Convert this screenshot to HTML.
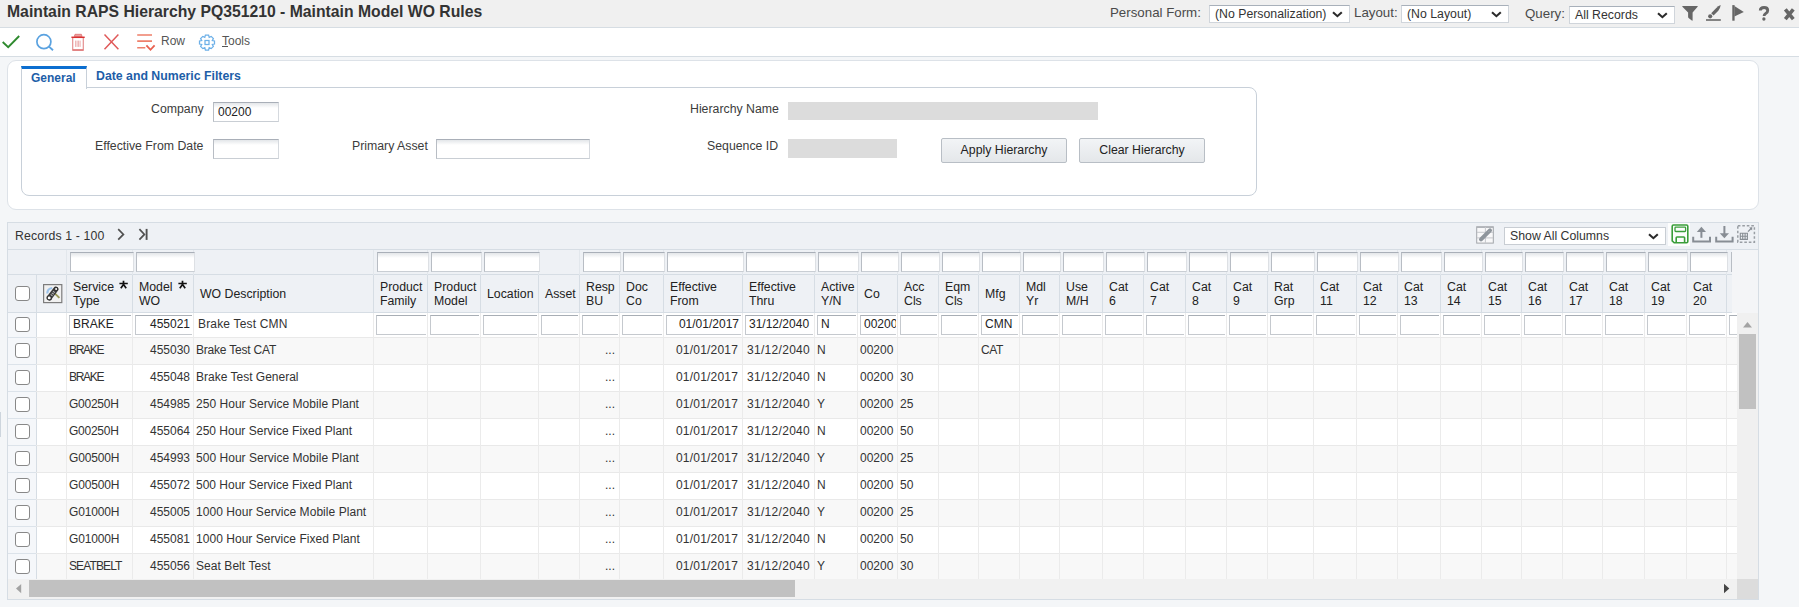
<!DOCTYPE html><html><head><meta charset="utf-8"><title>Maintain RAPS Hierarchy</title><style>
*{box-sizing:border-box;margin:0;padding:0}
html,body{width:1799px;height:607px;overflow:hidden}
body{position:relative;background:#f4f6f8;font-family:"Liberation Sans",sans-serif;color:#333;font-size:12px}
.a{position:absolute}
.t{position:absolute;white-space:nowrap;line-height:1}
#hdr{left:0;top:0;width:1799px;height:28px;background:#f0f0f0;border-bottom:1px solid #d6dde3}
#title{left:7px;top:4px;font-size:15.75px;font-weight:bold;color:#333}
.hl{font-size:13.3px;color:#4a4a4a}
.sel{position:absolute;background:#fff;border:1px solid #d0d5db;border-top-color:#a8b0ba}
.sel span{position:absolute;left:5px;top:1px;font-size:12.3px;color:#333;white-space:nowrap;line-height:14px}
.chev{position:absolute;width:11px;height:7px}
#tb{left:0;top:28px;width:1799px;height:29px;background:#fff;border-bottom:1px solid #d6dde3}
#panel{left:7px;top:60px;width:1752px;height:150px;background:#fff;border:1px solid #dde2e8;border-radius:9px}
#inner{left:21px;top:87px;width:1236px;height:109px;border:1px solid #c8d0d9;border-radius:8px;border-top-left-radius:0}
.lbl{font-size:12.3px;color:#3c3c3c;text-align:right}
.inp{position:absolute;background:linear-gradient(#e3e6e9,#fff 5px);border:1px solid #c9ced4;border-top-color:#a9afb8;border-left-color:#b8bdc4;border-right-color:#d5d9de}
.ro{position:absolute;background:#dcdcdc}
.btn{position:absolute;background:linear-gradient(#f2f4f6,#e4e7ea);border:1px solid #b8bec5;border-radius:2px;font-size:12.3px;color:#222;text-align:center;line-height:22px}
#grid{left:7px;top:222px;width:1752px;height:378px;background:#fff;border:1px solid #d6dde4}
#recbar{left:8px;top:223px;width:1750px;height:27px;background:#eef1f5;border-bottom:1px solid #d6dde4}
#frow{left:8px;top:250px;width:1724px;height:25px;background:#eef1f5;border-bottom:1px solid #d6dde4}
#hrow{left:8px;top:275px;width:1724px;height:38px;background:#eef1f5;border-bottom:1px solid #d6dde4}
.vh{position:absolute;width:1px;background:#d6dde4}
.vd{position:absolute;width:1px;background:#ebebeb}
.hd{position:absolute;height:1px;background:#e8e8e8}
.finp{position:absolute;background:linear-gradient(#e3e6e9,#fff 5px);border:1px solid #c9ced4;border-top-color:#a9afb8;border-left-color:#b8bdc4;border-right-color:#dde0e4}
.ht{position:absolute;font-size:12.3px;color:#222;line-height:13.5px;white-space:nowrap}
.cell{position:absolute;font-size:12px;color:#333;line-height:14px;white-space:nowrap}
.cb{position:absolute;width:15px;height:15px;border:1.5px solid #888;border-radius:3px;background:#fff}
.ei{position:absolute;background:#fff;border:1px solid #c5c9ce;border-right:none;border-top-color:#a8aeb5;font-size:12px;color:#222;line-height:18px;white-space:nowrap;overflow:hidden}
</style></head><body>
<div id="hdr" class="a"></div>
<div id="title" class="t">Maintain RAPS Hierarchy PQ351210 - Maintain Model WO Rules</div>
<div class="t hl" style="left:1110px;top:6px">Personal Form:</div>
<div class="sel" style="left:1209px;top:5px;width:141px;height:18px"><span>(No Personalization)</span><svg class="chev" style="left:122px;top:5px" viewBox="0 0 11 7"><path d="M1 1.2 L5.4 5.2 L9.8 1.2" stroke="#2a2a2a" stroke-width="2.1" fill="none"/></svg></div>
<div class="t hl" style="left:1354px;top:6px">Layout:</div>
<div class="sel" style="left:1401px;top:5px;width:108px;height:18px"><span>(No Layout)</span><svg class="chev" style="left:89px;top:5px" viewBox="0 0 11 7"><path d="M1 1.2 L5.4 5.2 L9.8 1.2" stroke="#2a2a2a" stroke-width="2.1" fill="none"/></svg></div>
<div class="t hl" style="left:1525px;top:7px">Query:</div>
<div class="sel" style="left:1569px;top:6px;width:106px;height:18px"><span>All Records</span><svg class="chev" style="left:87px;top:5px" viewBox="0 0 11 7"><path d="M1 1.2 L5.4 5.2 L9.8 1.2" stroke="#2a2a2a" stroke-width="2.1" fill="none"/></svg></div>
<svg class="a" style="left:1678px;top:2px" width="121" height="22" viewBox="0 0 121 22">
<path d="M4.6 3.9 H19.4 Q20.2 4 19.6 4.8 L14.6 10.4 V18.6 Q14.4 18.9 13.8 18.6 L10.6 16 Q10.1 15.5 10.1 14.8 V10.4 L4.4 4.8 Q3.9 4 4.6 3.9 Z" fill="#666"/>
<path d="M42.7 3 Q42.2 6.5 40.3 8.8 L35.6 13.6 L33.2 11.3 L37.8 6.4 Q40.2 4 42.7 3 Z" fill="#666"/>
<circle cx="32.2" cy="14.3" r="2.1" fill="#666"/>
<rect x="28" y="17.1" width="14.8" height="1.8" fill="#777"/>
<rect x="54.3" y="3.1" width="2.3" height="15.6" fill="#666"/>
<path d="M56.4 4 L65.8 9.9 L56.4 14.4 Z" fill="#666"/>
</svg>
<svg class="a" style="left:1748px;top:2px" width="51" height="22" viewBox="0 0 51 22">
<path d="M12.3 8.6 Q12.3 5.5 16.1 5.5 Q19.7 5.5 19.7 8.5 Q19.7 10.4 17.7 11.5 Q16.1 12.4 16.1 14.1" stroke="#666" stroke-width="2.9" fill="none"/>
<circle cx="15.9" cy="17" r="1.65" fill="#666"/>
<path d="M37.3 7.3 L45.3 17.2 M45.3 7.3 L37.3 17.2" stroke="#666" stroke-width="3.6"/>
</svg>
<div id="tb" class="a"></div>
<svg class="a" style="left:0;top:28px" width="260" height="28" viewBox="0 0 260 28">
<path d="M2.7 14 L8.2 19.1 L19.2 8" stroke="#2e8a2e" stroke-width="1.9" fill="none"/>
<circle cx="43.9" cy="13.7" r="7" stroke="#5aa2e0" stroke-width="1.7" fill="none"/><path d="M49 18.6 L53 22.2" stroke="#5aa2e0" stroke-width="1.9"/>
<path d="M74.3 8.6 L75 6.3 H81.4 L82.1 8.6 Z" fill="#eaa0a0" stroke="#e07070" stroke-width="0.8"/>
<path d="M71.4 9.3 H84.7" stroke="#d93030" stroke-width="1.5"/>
<path d="M72.7 10 V22.2 H83.3 V10" stroke="#e59090" stroke-width="1.2" fill="none"/>
<path d="M72.7 22 H83.3" stroke="#e07a7a" stroke-width="1.6"/>
<path d="M75.6 12.6 V18.9 M77.1 12.6 V18.9 M78.6 12.6 V18.9 M80.1 12.6 V18.9" stroke="#eaa5a5" stroke-width="0.9"/>
<path d="M104.5 6.6 L118.4 21.2 M118.4 6.6 L104.5 21.2" stroke="#e05a5a" stroke-width="1.5"/>
<path d="M137.2 7 H152 M137.2 13.1 H152 M137.2 19.7 H145.3" stroke="#ee7f6a" stroke-width="1.6"/><path d="M146.4 17.4 L150.5 21.8 L154.6 17.4" stroke="#e8604f" stroke-width="1.8" fill="none"/>
<g transform="translate(207,14.5)" fill="none" stroke="#6db0e8" stroke-width="1.25">
<path d="M-1.6 -7.5 L1.6 -7.5 L2.2 -5.2 L4.2 -6.1 L6.4 -3.9 L5.3 -2 L7.5 -1.5 L7.5 1.5 L5.3 2 L6.4 3.9 L4.2 6.1 L2.2 5.2 L1.6 7.5 L-1.6 7.5 L-2.2 5.2 L-4.2 6.1 L-6.4 3.9 L-5.3 2 L-7.5 1.5 L-7.5 -1.5 L-5.3 -2 L-6.4 -3.9 L-4.2 -6.1 L-2.2 -5.2 Z"/>
<rect x="-2" y="-2" width="4" height="4"/></g>
</svg>
<div class="t" style="left:161px;top:35px;font-size:12px;color:#555">Row</div>
<div class="t" style="left:222px;top:35px;font-size:12px;color:#555"><span style="text-decoration:underline">T</span>ools</div>
<div id="panel" class="a"></div>
<div id="inner" class="a"></div>
<div class="a" style="left:21px;top:66px;width:66px;height:23px;background:#fff;border-left:1px solid #c8d0d9;border-right:1px solid #c8d0d9;border-top:3px solid #0b6ed0"></div>
<div class="t" style="left:31px;top:72px;font-size:12px;font-weight:bold;color:#1d5ea8">General</div>
<div class="t" style="left:96px;top:70px;font-size:12.3px;font-weight:bold;color:#1d5ea8">Date and Numeric Filters</div>
<div class="t lbl" style="left:151px;top:103px">Company</div>
<div class="inp" style="left:213px;top:102px;width:66px;height:20px"><span class="t" style="left:4px;top:3px;font-size:12px;color:#222">00200</span></div>
<div class="t lbl" style="left:95px;top:140px">Effective From Date</div>
<div class="inp" style="left:213px;top:139px;width:66px;height:20px"></div>
<div class="t lbl" style="left:352px;top:140px">Primary Asset</div>
<div class="inp" style="left:436px;top:139px;width:154px;height:20px"></div>
<div class="t lbl" style="left:690px;top:103px">Hierarchy Name</div>
<div class="ro" style="left:788px;top:102px;width:310px;height:18px"></div>
<div class="t lbl" style="left:707px;top:140px">Sequence ID</div>
<div class="ro" style="left:788px;top:139px;width:109px;height:19px"></div>
<div class="btn" style="left:941px;top:138px;width:126px;height:25px">Apply Hierarchy</div>
<div class="btn" style="left:1079px;top:138px;width:126px;height:25px">Clear Hierarchy</div>
<div id="grid" class="a"></div>
<div id="recbar" class="a"></div>
<div class="t" style="left:15px;top:230px;font-size:12.3px;color:#333;letter-spacing:0.13px">Records 1 - 100</div>
<svg class="a" style="left:110px;top:226px" width="44" height="18" viewBox="0 0 44 18">
<path d="M8.2 3.2 L13.4 8.4 L8.2 13.6" stroke="#505050" stroke-width="1.7" fill="none"/>
<path d="M29.4 3.2 L34.4 8.4 L29.4 13.6" stroke="#505050" stroke-width="1.7" fill="none"/><path d="M36.6 2.9 V13.9" stroke="#505050" stroke-width="1.9"/>
</svg>
<svg class="a" style="left:1474px;top:223px" width="24" height="24" viewBox="0 0 24 24">
<rect x="2.7" y="3.8" width="16.6" height="16.3" fill="#f8f8f9" stroke="#a2a6ab" stroke-width="1"/>
<path d="M2.7 4.3 H19.3" stroke="#b0b4b9" stroke-width="1.4"/>
<path d="M11.4 4 V20 M3 9.3 H19 M3 14.9 H19" stroke="#c5c8cc" stroke-width="1"/>
<path d="M7 16.3 L16 7.3" stroke="#8e959c" stroke-width="4" stroke-linecap="round"/>
<path d="M14.3 9 L15.6 7.7" stroke="#a8aeb4" stroke-width="1"/>
</svg>
<div class="sel" style="left:1504px;top:227px;width:162px;height:18px;border-color:#c8cdd3"><span style="top:1px;font-size:12.3px">Show All Columns</span><svg class="chev" style="left:143px;top:5px" viewBox="0 0 11 7"><path d="M1 1.2 L5.4 5.2 L9.8 1.2" stroke="#2a2a2a" stroke-width="2.1" fill="none"/></svg></div>
<svg class="a" style="left:1665px;top:220px" width="95" height="30" viewBox="0 0 95 30">
<rect x="3" y="3" width="22" height="23" fill="#fdfdfd"/>
<path d="M7.2 6.2 Q7.2 5 8.4 5 H21.6 Q22.8 5 22.8 6.2 V21.6 Q22.8 22.8 21.6 22.8 H9.2 L7.2 20.8 Z" fill="none" stroke="#3a9e3a" stroke-width="1.6"/>
<rect x="10" y="7.2" width="10.6" height="4.3" rx="0.8" fill="none" stroke="#3a9e3a" stroke-width="1.3"/>
<path d="M11.2 22.5 V17.8 Q11.2 17 12 17 H18.8 Q19.6 17 19.6 17.8 V22.5" fill="none" stroke="#3a9e3a" stroke-width="1.6"/>
<path d="M28.2 16.8 V21.5 H45 V16.8" stroke="#878d94" stroke-width="2" fill="none"/><path d="M36.4 17.8 V10" stroke="#878d94" stroke-width="2"/><path d="M31.8 12 L36.4 6.8 L41 12 Z" fill="#878d94"/>
<path d="M51.2 16.8 V21.5 H67.6 V16.8" stroke="#878d94" stroke-width="2" fill="none"/><path d="M59.4 6 V14" stroke="#878d94" stroke-width="2"/><path d="M54.8 13.2 L59.4 18.2 L64 13.2 Z" fill="#878d94"/>
<rect x="72.8" y="5.8" width="16.6" height="16.4" fill="none" stroke="#999ea4" stroke-width="1.5" stroke-dasharray="2.6,1.9"/>
<path d="M75.3 13.2 H82.4 V19.4 H75.3 Z M75.3 16.3 H82.4 M77.7 13.2 V19.4 M80.1 13.2 V19.4" stroke="#878d94" stroke-width="1.1" fill="none"/>
<path d="M83 11.6 L86.6 8" stroke="#878d94" stroke-width="1.3"/><path d="M84.2 7.5 L87.3 7.3 L87.1 10.4 Z" fill="#878d94"/>
</svg>
<div class="a" style="left:1732px;top:250px;width:26px;height:63px;background:#f4f5f7"></div>
<div id="frow" class="a"></div>
<div class="a" style="left:1731px;top:252px;width:1px;height:20px;background:#b8bdc4"></div>
<div id="hrow" class="a"></div>
<div class="vh" style="left:36px;top:275px;height:38px"></div>
<div class="vh" style="left:66px;top:275px;height:38px"></div>
<div class="vh" style="left:132px;top:275px;height:38px"></div>
<div class="vh" style="left:132px;top:250px;height:25px;background:#e2e7ec"></div>
<div class="finp" style="left:70px;top:252px;width:64px;height:20px"></div>
<div class="vh" style="left:193px;top:275px;height:38px"></div>
<div class="vh" style="left:193px;top:250px;height:25px;background:#e2e7ec"></div>
<div class="finp" style="left:136px;top:252px;width:59px;height:20px"></div>
<div class="vh" style="left:373px;top:275px;height:38px"></div>
<div class="vh" style="left:373px;top:250px;height:25px;background:#e2e7ec"></div>
<div class="vh" style="left:427px;top:275px;height:38px"></div>
<div class="vh" style="left:427px;top:250px;height:25px;background:#e2e7ec"></div>
<div class="finp" style="left:377px;top:252px;width:52px;height:20px"></div>
<div class="vh" style="left:480px;top:275px;height:38px"></div>
<div class="vh" style="left:480px;top:250px;height:25px;background:#e2e7ec"></div>
<div class="finp" style="left:431px;top:252px;width:51px;height:20px"></div>
<div class="vh" style="left:538px;top:275px;height:38px"></div>
<div class="vh" style="left:538px;top:250px;height:25px;background:#e2e7ec"></div>
<div class="finp" style="left:484px;top:252px;width:56px;height:20px"></div>
<div class="vh" style="left:579px;top:275px;height:38px"></div>
<div class="vh" style="left:579px;top:250px;height:25px;background:#e2e7ec"></div>
<div class="vh" style="left:619px;top:275px;height:38px"></div>
<div class="vh" style="left:619px;top:250px;height:25px;background:#e2e7ec"></div>
<div class="finp" style="left:583px;top:252px;width:38px;height:20px"></div>
<div class="vh" style="left:663px;top:275px;height:38px"></div>
<div class="vh" style="left:663px;top:250px;height:25px;background:#e2e7ec"></div>
<div class="finp" style="left:623px;top:252px;width:42px;height:20px"></div>
<div class="vh" style="left:742px;top:275px;height:38px"></div>
<div class="vh" style="left:742px;top:250px;height:25px;background:#e2e7ec"></div>
<div class="finp" style="left:667px;top:252px;width:77px;height:20px"></div>
<div class="vh" style="left:814px;top:275px;height:38px"></div>
<div class="vh" style="left:814px;top:250px;height:25px;background:#e2e7ec"></div>
<div class="finp" style="left:746px;top:252px;width:70px;height:20px"></div>
<div class="vh" style="left:857px;top:275px;height:38px"></div>
<div class="vh" style="left:857px;top:250px;height:25px;background:#e2e7ec"></div>
<div class="finp" style="left:818px;top:252px;width:41px;height:20px"></div>
<div class="vh" style="left:897px;top:275px;height:38px"></div>
<div class="vh" style="left:897px;top:250px;height:25px;background:#e2e7ec"></div>
<div class="finp" style="left:861px;top:252px;width:38px;height:20px"></div>
<div class="vh" style="left:938px;top:275px;height:38px"></div>
<div class="vh" style="left:938px;top:250px;height:25px;background:#e2e7ec"></div>
<div class="finp" style="left:901px;top:252px;width:39px;height:20px"></div>
<div class="vh" style="left:978px;top:275px;height:38px"></div>
<div class="vh" style="left:978px;top:250px;height:25px;background:#e2e7ec"></div>
<div class="finp" style="left:942px;top:252px;width:38px;height:20px"></div>
<div class="vh" style="left:1019px;top:275px;height:38px"></div>
<div class="vh" style="left:1019px;top:250px;height:25px;background:#e2e7ec"></div>
<div class="finp" style="left:982px;top:252px;width:39px;height:20px"></div>
<div class="vh" style="left:1059px;top:275px;height:38px"></div>
<div class="vh" style="left:1059px;top:250px;height:25px;background:#e2e7ec"></div>
<div class="finp" style="left:1023px;top:252px;width:38px;height:20px"></div>
<div class="vh" style="left:1102px;top:275px;height:38px"></div>
<div class="vh" style="left:1102px;top:250px;height:25px;background:#e2e7ec"></div>
<div class="finp" style="left:1063px;top:252px;width:41px;height:20px"></div>
<div class="vh" style="left:1143px;top:275px;height:38px"></div>
<div class="vh" style="left:1143px;top:250px;height:25px;background:#e2e7ec"></div>
<div class="finp" style="left:1106px;top:252px;width:39px;height:20px"></div>
<div class="vh" style="left:1185px;top:275px;height:38px"></div>
<div class="vh" style="left:1185px;top:250px;height:25px;background:#e2e7ec"></div>
<div class="finp" style="left:1147px;top:252px;width:40px;height:20px"></div>
<div class="vh" style="left:1226px;top:275px;height:38px"></div>
<div class="vh" style="left:1226px;top:250px;height:25px;background:#e2e7ec"></div>
<div class="finp" style="left:1189px;top:252px;width:39px;height:20px"></div>
<div class="vh" style="left:1267px;top:275px;height:38px"></div>
<div class="vh" style="left:1267px;top:250px;height:25px;background:#e2e7ec"></div>
<div class="finp" style="left:1230px;top:252px;width:39px;height:20px"></div>
<div class="vh" style="left:1313px;top:275px;height:38px"></div>
<div class="vh" style="left:1313px;top:250px;height:25px;background:#e2e7ec"></div>
<div class="finp" style="left:1271px;top:252px;width:44px;height:20px"></div>
<div class="vh" style="left:1356px;top:275px;height:38px"></div>
<div class="vh" style="left:1356px;top:250px;height:25px;background:#e2e7ec"></div>
<div class="finp" style="left:1317px;top:252px;width:41px;height:20px"></div>
<div class="vh" style="left:1397px;top:275px;height:38px"></div>
<div class="vh" style="left:1397px;top:250px;height:25px;background:#e2e7ec"></div>
<div class="finp" style="left:1360px;top:252px;width:39px;height:20px"></div>
<div class="vh" style="left:1440px;top:275px;height:38px"></div>
<div class="vh" style="left:1440px;top:250px;height:25px;background:#e2e7ec"></div>
<div class="finp" style="left:1401px;top:252px;width:41px;height:20px"></div>
<div class="vh" style="left:1481px;top:275px;height:38px"></div>
<div class="vh" style="left:1481px;top:250px;height:25px;background:#e2e7ec"></div>
<div class="finp" style="left:1444px;top:252px;width:39px;height:20px"></div>
<div class="vh" style="left:1521px;top:275px;height:38px"></div>
<div class="vh" style="left:1521px;top:250px;height:25px;background:#e2e7ec"></div>
<div class="finp" style="left:1485px;top:252px;width:38px;height:20px"></div>
<div class="vh" style="left:1562px;top:275px;height:38px"></div>
<div class="vh" style="left:1562px;top:250px;height:25px;background:#e2e7ec"></div>
<div class="finp" style="left:1525px;top:252px;width:39px;height:20px"></div>
<div class="vh" style="left:1602px;top:275px;height:38px"></div>
<div class="vh" style="left:1602px;top:250px;height:25px;background:#e2e7ec"></div>
<div class="finp" style="left:1566px;top:252px;width:38px;height:20px"></div>
<div class="vh" style="left:1644px;top:275px;height:38px"></div>
<div class="vh" style="left:1644px;top:250px;height:25px;background:#e2e7ec"></div>
<div class="finp" style="left:1606px;top:252px;width:40px;height:20px"></div>
<div class="vh" style="left:1686px;top:275px;height:38px"></div>
<div class="vh" style="left:1686px;top:250px;height:25px;background:#e2e7ec"></div>
<div class="finp" style="left:1648px;top:252px;width:40px;height:20px"></div>
<div class="vh" style="left:1726px;top:275px;height:38px"></div>
<div class="vh" style="left:1726px;top:250px;height:25px;background:#e2e7ec"></div>
<div class="finp" style="left:1690px;top:252px;width:38px;height:20px"></div>
<div class="vh" style="left:66px;top:250px;height:25px;background:#e2e7ec"></div>
<div class="cb" style="left:15px;top:286px"></div>
<svg class="a" style="left:43px;top:284px" width="20" height="20" viewBox="0 0 20 20">
<rect x="0.6" y="0.6" width="18.2" height="18" fill="#f1f1f1" stroke="#7d7d7d" stroke-width="1.2"/>
<path d="M4.3 9.5 Q4.3 4.6 9.2 4" stroke="#9cc3ea" stroke-width="2.2" fill="none"/>
<path d="M11.8 9.3 L16.4 13.9" stroke="#9a9a5a" stroke-width="1.9"/>
<path d="M6.6 13.4 L12.8 5.2" stroke="#3a3a3a" stroke-width="5.2" stroke-linecap="round"/>
<path d="M8.3 11.6 L11.4 7.3" stroke="#b5b5b5" stroke-width="2.4" stroke-dasharray="1,1"/>
<circle cx="6.2" cy="13.9" r="2.1" fill="#fff" stroke="#333" stroke-width="1.3"/>
<circle cx="13.1" cy="4.9" r="1.6" fill="#fff" stroke="#333" stroke-width="1.2"/>
</svg>
<div class="ht" style="left:73px;top:281px">Service<br>Type</div>
<svg class="a" style="left:119px;top:280px" width="10" height="10" viewBox="0 0 10 10"><path d="M4.5 0.8 V5 M0.4 3.5 H8.8 M4.5 4.6 L1.8 8.2 M4.5 4.6 L7.2 8.2" stroke="#111" stroke-width="1.7" fill="none"/></svg>
<div class="ht" style="left:139px;top:281px">Model<br>WO</div>
<svg class="a" style="left:178px;top:280px" width="10" height="10" viewBox="0 0 10 10"><path d="M4.5 0.8 V5 M0.4 3.5 H8.8 M4.5 4.6 L1.8 8.2 M4.5 4.6 L7.2 8.2" stroke="#111" stroke-width="1.7" fill="none"/></svg>
<div class="ht" style="left:200px;top:288px">WO Description</div>
<div class="ht" style="left:380px;top:281px">Product<br>Family</div>
<div class="ht" style="left:434px;top:281px">Product<br>Model</div>
<div class="ht" style="left:487px;top:288px">Location</div>
<div class="ht" style="left:545px;top:288px">Asset</div>
<div class="ht" style="left:586px;top:281px">Resp<br>BU</div>
<div class="ht" style="left:626px;top:281px">Doc<br>Co</div>
<div class="ht" style="left:670px;top:281px">Effective<br>From</div>
<div class="ht" style="left:749px;top:281px">Effective<br>Thru</div>
<div class="ht" style="left:821px;top:281px">Active<br>Y/N</div>
<div class="ht" style="left:864px;top:288px">Co</div>
<div class="ht" style="left:904px;top:281px">Acc<br>Cls</div>
<div class="ht" style="left:945px;top:281px">Eqm<br>Cls</div>
<div class="ht" style="left:985px;top:288px">Mfg</div>
<div class="ht" style="left:1026px;top:281px">Mdl<br>Yr</div>
<div class="ht" style="left:1066px;top:281px">Use<br>M/H</div>
<div class="ht" style="left:1109px;top:281px">Cat<br>6</div>
<div class="ht" style="left:1150px;top:281px">Cat<br>7</div>
<div class="ht" style="left:1192px;top:281px">Cat<br>8</div>
<div class="ht" style="left:1233px;top:281px">Cat<br>9</div>
<div class="ht" style="left:1274px;top:281px">Rat<br>Grp</div>
<div class="ht" style="left:1320px;top:281px">Cat<br>11</div>
<div class="ht" style="left:1363px;top:281px">Cat<br>12</div>
<div class="ht" style="left:1404px;top:281px">Cat<br>13</div>
<div class="ht" style="left:1447px;top:281px">Cat<br>14</div>
<div class="ht" style="left:1488px;top:281px">Cat<br>15</div>
<div class="ht" style="left:1528px;top:281px">Cat<br>16</div>
<div class="ht" style="left:1569px;top:281px">Cat<br>17</div>
<div class="ht" style="left:1609px;top:281px">Cat<br>18</div>
<div class="ht" style="left:1651px;top:281px">Cat<br>19</div>
<div class="ht" style="left:1693px;top:281px">Cat<br>20</div>
<div class="a" style="left:8px;top:313px;width:29px;height:267px;background:#f5f7fa;border-right:1px solid #d6dde4"></div>
<div class="a" style="left:37px;top:337px;width:1700px;height:27px;background:#f8f8f8"></div>
<div class="a" style="left:37px;top:364px;width:1700px;height:27px;background:#fff"></div>
<div class="a" style="left:37px;top:391px;width:1700px;height:27px;background:#f8f8f8"></div>
<div class="a" style="left:37px;top:418px;width:1700px;height:27px;background:#fff"></div>
<div class="a" style="left:37px;top:445px;width:1700px;height:27px;background:#f8f8f8"></div>
<div class="a" style="left:37px;top:472px;width:1700px;height:27px;background:#fff"></div>
<div class="a" style="left:37px;top:499px;width:1700px;height:27px;background:#f8f8f8"></div>
<div class="a" style="left:37px;top:526px;width:1700px;height:27px;background:#fff"></div>
<div class="a" style="left:37px;top:553px;width:1700px;height:27px;background:#f8f8f8"></div>
<div class="hd" style="left:8px;top:337px;width:1729px;background:#e9e9e9"></div>
<div class="hd" style="left:8px;top:364px;width:1729px;background:#e9e9e9"></div>
<div class="hd" style="left:8px;top:391px;width:1729px;background:#e9e9e9"></div>
<div class="hd" style="left:8px;top:418px;width:1729px;background:#e9e9e9"></div>
<div class="hd" style="left:8px;top:445px;width:1729px;background:#e9e9e9"></div>
<div class="hd" style="left:8px;top:472px;width:1729px;background:#e9e9e9"></div>
<div class="hd" style="left:8px;top:499px;width:1729px;background:#e9e9e9"></div>
<div class="hd" style="left:8px;top:526px;width:1729px;background:#e9e9e9"></div>
<div class="hd" style="left:8px;top:553px;width:1729px;background:#e9e9e9"></div>
<div class="hd" style="left:8px;top:337px;width:28px;background:#dce3ea"></div>
<div class="hd" style="left:8px;top:364px;width:28px;background:#dce3ea"></div>
<div class="hd" style="left:8px;top:391px;width:28px;background:#dce3ea"></div>
<div class="hd" style="left:8px;top:418px;width:28px;background:#dce3ea"></div>
<div class="hd" style="left:8px;top:445px;width:28px;background:#dce3ea"></div>
<div class="hd" style="left:8px;top:472px;width:28px;background:#dce3ea"></div>
<div class="hd" style="left:8px;top:499px;width:28px;background:#dce3ea"></div>
<div class="hd" style="left:8px;top:526px;width:28px;background:#dce3ea"></div>
<div class="hd" style="left:8px;top:553px;width:28px;background:#dce3ea"></div>
<div class="vd" style="left:66px;top:313px;height:266px"></div>
<div class="vd" style="left:132px;top:313px;height:266px"></div>
<div class="vd" style="left:193px;top:313px;height:266px"></div>
<div class="vd" style="left:373px;top:313px;height:266px"></div>
<div class="vd" style="left:427px;top:313px;height:266px"></div>
<div class="vd" style="left:480px;top:313px;height:266px"></div>
<div class="vd" style="left:538px;top:313px;height:266px"></div>
<div class="vd" style="left:579px;top:313px;height:266px"></div>
<div class="vd" style="left:619px;top:313px;height:266px"></div>
<div class="vd" style="left:663px;top:313px;height:266px"></div>
<div class="vd" style="left:742px;top:313px;height:266px"></div>
<div class="vd" style="left:814px;top:313px;height:266px"></div>
<div class="vd" style="left:857px;top:313px;height:266px"></div>
<div class="vd" style="left:897px;top:313px;height:266px"></div>
<div class="vd" style="left:938px;top:313px;height:266px"></div>
<div class="vd" style="left:978px;top:313px;height:266px"></div>
<div class="vd" style="left:1019px;top:313px;height:266px"></div>
<div class="vd" style="left:1059px;top:313px;height:266px"></div>
<div class="vd" style="left:1102px;top:313px;height:266px"></div>
<div class="vd" style="left:1143px;top:313px;height:266px"></div>
<div class="vd" style="left:1185px;top:313px;height:266px"></div>
<div class="vd" style="left:1226px;top:313px;height:266px"></div>
<div class="vd" style="left:1267px;top:313px;height:266px"></div>
<div class="vd" style="left:1313px;top:313px;height:266px"></div>
<div class="vd" style="left:1356px;top:313px;height:266px"></div>
<div class="vd" style="left:1397px;top:313px;height:266px"></div>
<div class="vd" style="left:1440px;top:313px;height:266px"></div>
<div class="vd" style="left:1481px;top:313px;height:266px"></div>
<div class="vd" style="left:1521px;top:313px;height:266px"></div>
<div class="vd" style="left:1562px;top:313px;height:266px"></div>
<div class="vd" style="left:1602px;top:313px;height:266px"></div>
<div class="vd" style="left:1644px;top:313px;height:266px"></div>
<div class="vd" style="left:1686px;top:313px;height:266px"></div>
<div class="vd" style="left:1726px;top:313px;height:266px"></div>
<div class="cb" style="left:15px;top:317px"></div>
<div class="cb" style="left:15px;top:343px"></div>
<div class="cb" style="left:15px;top:370px"></div>
<div class="cb" style="left:15px;top:397px"></div>
<div class="cb" style="left:15px;top:424px"></div>
<div class="cb" style="left:15px;top:451px"></div>
<div class="cb" style="left:15px;top:478px"></div>
<div class="cb" style="left:15px;top:505px"></div>
<div class="cb" style="left:15px;top:532px"></div>
<div class="cb" style="left:15px;top:559px"></div>
<div class="ei" style="left:69px;top:315px;width:62px;height:20px"><span class="t" style="left:3px;top:2px">BRAKE</span></div>
<div class="ei" style="left:135px;top:315px;width:57px;height:20px"><span class="t" style="right:2px;top:2px">455021</span></div>
<div class="cell" style="left:198px;top:317px;letter-spacing:0.17px">Brake Test CMN</div>
<div class="ei" style="left:376px;top:315px;width:50px;height:20px"></div>
<div class="ei" style="left:430px;top:315px;width:49px;height:20px"></div>
<div class="ei" style="left:483px;top:315px;width:54px;height:20px"></div>
<div class="ei" style="left:541px;top:315px;width:37px;height:20px"></div>
<div class="ei" style="left:582px;top:315px;width:36px;height:20px"></div>
<div class="ei" style="left:622px;top:315px;width:40px;height:20px"></div>
<div class="ei" style="left:666px;top:315px;width:75px;height:20px"><span class="t" style="right:2px;top:2px">01/01/2017</span></div>
<div class="ei" style="left:745px;top:315px;width:68px;height:20px"><span class="t" style="left:3px;top:2px">31/12/2040</span></div>
<div class="ei" style="left:817px;top:315px;width:39px;height:20px"><span class="t" style="left:3px;top:2px">N</span></div>
<div class="ei" style="left:860px;top:315px;width:36px;height:20px"><span class="t" style="left:3px;top:2px">00200</span></div>
<div class="ei" style="left:900px;top:315px;width:37px;height:20px"></div>
<div class="ei" style="left:941px;top:315px;width:36px;height:20px"></div>
<div class="ei" style="left:981px;top:315px;width:37px;height:20px"><span class="t" style="left:3px;top:2px">CMN</span></div>
<div class="ei" style="left:1022px;top:315px;width:36px;height:20px"></div>
<div class="ei" style="left:1062px;top:315px;width:39px;height:20px"></div>
<div class="ei" style="left:1105px;top:315px;width:37px;height:20px"></div>
<div class="ei" style="left:1146px;top:315px;width:38px;height:20px"></div>
<div class="ei" style="left:1188px;top:315px;width:37px;height:20px"></div>
<div class="ei" style="left:1229px;top:315px;width:37px;height:20px"></div>
<div class="ei" style="left:1270px;top:315px;width:42px;height:20px"></div>
<div class="ei" style="left:1316px;top:315px;width:39px;height:20px"></div>
<div class="ei" style="left:1359px;top:315px;width:37px;height:20px"></div>
<div class="ei" style="left:1400px;top:315px;width:39px;height:20px"></div>
<div class="ei" style="left:1443px;top:315px;width:37px;height:20px"></div>
<div class="ei" style="left:1484px;top:315px;width:36px;height:20px"></div>
<div class="ei" style="left:1524px;top:315px;width:37px;height:20px"></div>
<div class="ei" style="left:1565px;top:315px;width:36px;height:20px"></div>
<div class="ei" style="left:1605px;top:315px;width:38px;height:20px"></div>
<div class="ei" style="left:1647px;top:315px;width:38px;height:20px"></div>
<div class="ei" style="left:1689px;top:315px;width:36px;height:20px"></div>
<div class="ei" style="left:1729px;top:315px;width:8px;height:20px;border-right:none"></div>
<div class="cell" style="left:69px;top:343px;letter-spacing:-1.3px">BRAKE</div>
<div class="cell" style="left:132px;top:343px;width:58px;text-align:right">455030</div>
<div class="cell" style="left:196px;top:343px;letter-spacing:-0.2px">Brake Test CAT</div>
<div class="cell" style="left:605px;top:343px">...</div>
<div class="cell" style="left:676px;top:343px;letter-spacing:0.2px">01/01/2017</div>
<div class="cell" style="left:747px;top:343px;letter-spacing:0.3px">31/12/2040</div>
<div class="cell" style="left:817px;top:343px">N</div>
<div class="cell" style="left:860px;top:343px">00200</div>
<div class="cell" style="left:981px;top:343px;letter-spacing:-0.35px">CAT</div>
<div class="cell" style="left:69px;top:370px;letter-spacing:-1.3px">BRAKE</div>
<div class="cell" style="left:132px;top:370px;width:58px;text-align:right">455048</div>
<div class="cell" style="left:196px;top:370px">Brake Test General</div>
<div class="cell" style="left:605px;top:370px">...</div>
<div class="cell" style="left:676px;top:370px;letter-spacing:0.2px">01/01/2017</div>
<div class="cell" style="left:747px;top:370px;letter-spacing:0.3px">31/12/2040</div>
<div class="cell" style="left:817px;top:370px">N</div>
<div class="cell" style="left:860px;top:370px">00200</div>
<div class="cell" style="left:900px;top:370px">30</div>
<div class="cell" style="left:69px;top:397px;letter-spacing:-0.25px">G00250H</div>
<div class="cell" style="left:132px;top:397px;width:58px;text-align:right">454985</div>
<div class="cell" style="left:196px;top:397px;letter-spacing:0.03px">250 Hour Service Mobile Plant</div>
<div class="cell" style="left:605px;top:397px">...</div>
<div class="cell" style="left:676px;top:397px;letter-spacing:0.2px">01/01/2017</div>
<div class="cell" style="left:747px;top:397px;letter-spacing:0.3px">31/12/2040</div>
<div class="cell" style="left:817px;top:397px">Y</div>
<div class="cell" style="left:860px;top:397px">00200</div>
<div class="cell" style="left:900px;top:397px">25</div>
<div class="cell" style="left:69px;top:424px;letter-spacing:-0.25px">G00250H</div>
<div class="cell" style="left:132px;top:424px;width:58px;text-align:right">455064</div>
<div class="cell" style="left:196px;top:424px">250 Hour Service Fixed Plant</div>
<div class="cell" style="left:605px;top:424px">...</div>
<div class="cell" style="left:676px;top:424px;letter-spacing:0.2px">01/01/2017</div>
<div class="cell" style="left:747px;top:424px;letter-spacing:0.3px">31/12/2040</div>
<div class="cell" style="left:817px;top:424px">N</div>
<div class="cell" style="left:860px;top:424px">00200</div>
<div class="cell" style="left:900px;top:424px">50</div>
<div class="cell" style="left:69px;top:451px;letter-spacing:-0.17px">G00500H</div>
<div class="cell" style="left:132px;top:451px;width:58px;text-align:right">454993</div>
<div class="cell" style="left:196px;top:451px;letter-spacing:0.03px">500 Hour Service Mobile Plant</div>
<div class="cell" style="left:605px;top:451px">...</div>
<div class="cell" style="left:676px;top:451px;letter-spacing:0.2px">01/01/2017</div>
<div class="cell" style="left:747px;top:451px;letter-spacing:0.3px">31/12/2040</div>
<div class="cell" style="left:817px;top:451px">Y</div>
<div class="cell" style="left:860px;top:451px">00200</div>
<div class="cell" style="left:900px;top:451px">25</div>
<div class="cell" style="left:69px;top:478px;letter-spacing:-0.17px">G00500H</div>
<div class="cell" style="left:132px;top:478px;width:58px;text-align:right">455072</div>
<div class="cell" style="left:196px;top:478px">500 Hour Service Fixed Plant</div>
<div class="cell" style="left:605px;top:478px">...</div>
<div class="cell" style="left:676px;top:478px;letter-spacing:0.2px">01/01/2017</div>
<div class="cell" style="left:747px;top:478px;letter-spacing:0.3px">31/12/2040</div>
<div class="cell" style="left:817px;top:478px">N</div>
<div class="cell" style="left:860px;top:478px">00200</div>
<div class="cell" style="left:900px;top:478px">50</div>
<div class="cell" style="left:69px;top:505px;letter-spacing:-0.17px">G01000H</div>
<div class="cell" style="left:132px;top:505px;width:58px;text-align:right">455005</div>
<div class="cell" style="left:196px;top:505px;letter-spacing:0.05px">1000 Hour Service Mobile Plant</div>
<div class="cell" style="left:605px;top:505px">...</div>
<div class="cell" style="left:676px;top:505px;letter-spacing:0.2px">01/01/2017</div>
<div class="cell" style="left:747px;top:505px;letter-spacing:0.3px">31/12/2040</div>
<div class="cell" style="left:817px;top:505px">Y</div>
<div class="cell" style="left:860px;top:505px">00200</div>
<div class="cell" style="left:900px;top:505px">25</div>
<div class="cell" style="left:69px;top:532px;letter-spacing:-0.17px">G01000H</div>
<div class="cell" style="left:132px;top:532px;width:58px;text-align:right">455081</div>
<div class="cell" style="left:196px;top:532px;letter-spacing:0.04px">1000 Hour Service Fixed Plant</div>
<div class="cell" style="left:605px;top:532px">...</div>
<div class="cell" style="left:676px;top:532px;letter-spacing:0.2px">01/01/2017</div>
<div class="cell" style="left:747px;top:532px;letter-spacing:0.3px">31/12/2040</div>
<div class="cell" style="left:817px;top:532px">N</div>
<div class="cell" style="left:860px;top:532px">00200</div>
<div class="cell" style="left:900px;top:532px">50</div>
<div class="cell" style="left:69px;top:559px;letter-spacing:-0.88px">SEATBELT</div>
<div class="cell" style="left:132px;top:559px;width:58px;text-align:right">455056</div>
<div class="cell" style="left:196px;top:559px;letter-spacing:0.06px">Seat Belt Test</div>
<div class="cell" style="left:605px;top:559px">...</div>
<div class="cell" style="left:676px;top:559px;letter-spacing:0.2px">01/01/2017</div>
<div class="cell" style="left:747px;top:559px;letter-spacing:0.3px">31/12/2040</div>
<div class="cell" style="left:817px;top:559px">Y</div>
<div class="cell" style="left:860px;top:559px">00200</div>
<div class="cell" style="left:900px;top:559px">30</div>
<div class="a" style="left:1737px;top:313px;width:21px;height:267px;background:#f0f0f0"></div>
<div class="a" style="left:1739px;top:334px;width:17px;height:75px;background:#c1c1c1"></div>
<svg class="a" style="left:1737px;top:316px" width="21" height="14"><path d="M6 11.5 L10.5 6 L15 11.5 Z" fill="#a3a3a3"/></svg>
<div class="a" style="left:8px;top:579px;width:1729px;height:20px;background:#f1f1f1"></div>
<div class="a" style="left:29px;top:580px;width:766px;height:17px;background:#c1c1c1"></div>
<div class="a" style="left:1737px;top:579px;width:21px;height:20px;background:#dcdcdc"></div>
<svg class="a" style="left:8px;top:579px" width="20" height="20"><path d="M13.2 5 L8 9.6 L13.2 14.2 Z" fill="#a3a3a3"/></svg>
<svg class="a" style="left:1718px;top:579px" width="20" height="20"><path d="M6 4.8 L11.3 9.6 L6 14.3 Z" fill="#444"/></svg>
<div class="a" style="left:0;top:412px;width:1px;height:25px;background:#cdd5dd"></div>
</body></html>
